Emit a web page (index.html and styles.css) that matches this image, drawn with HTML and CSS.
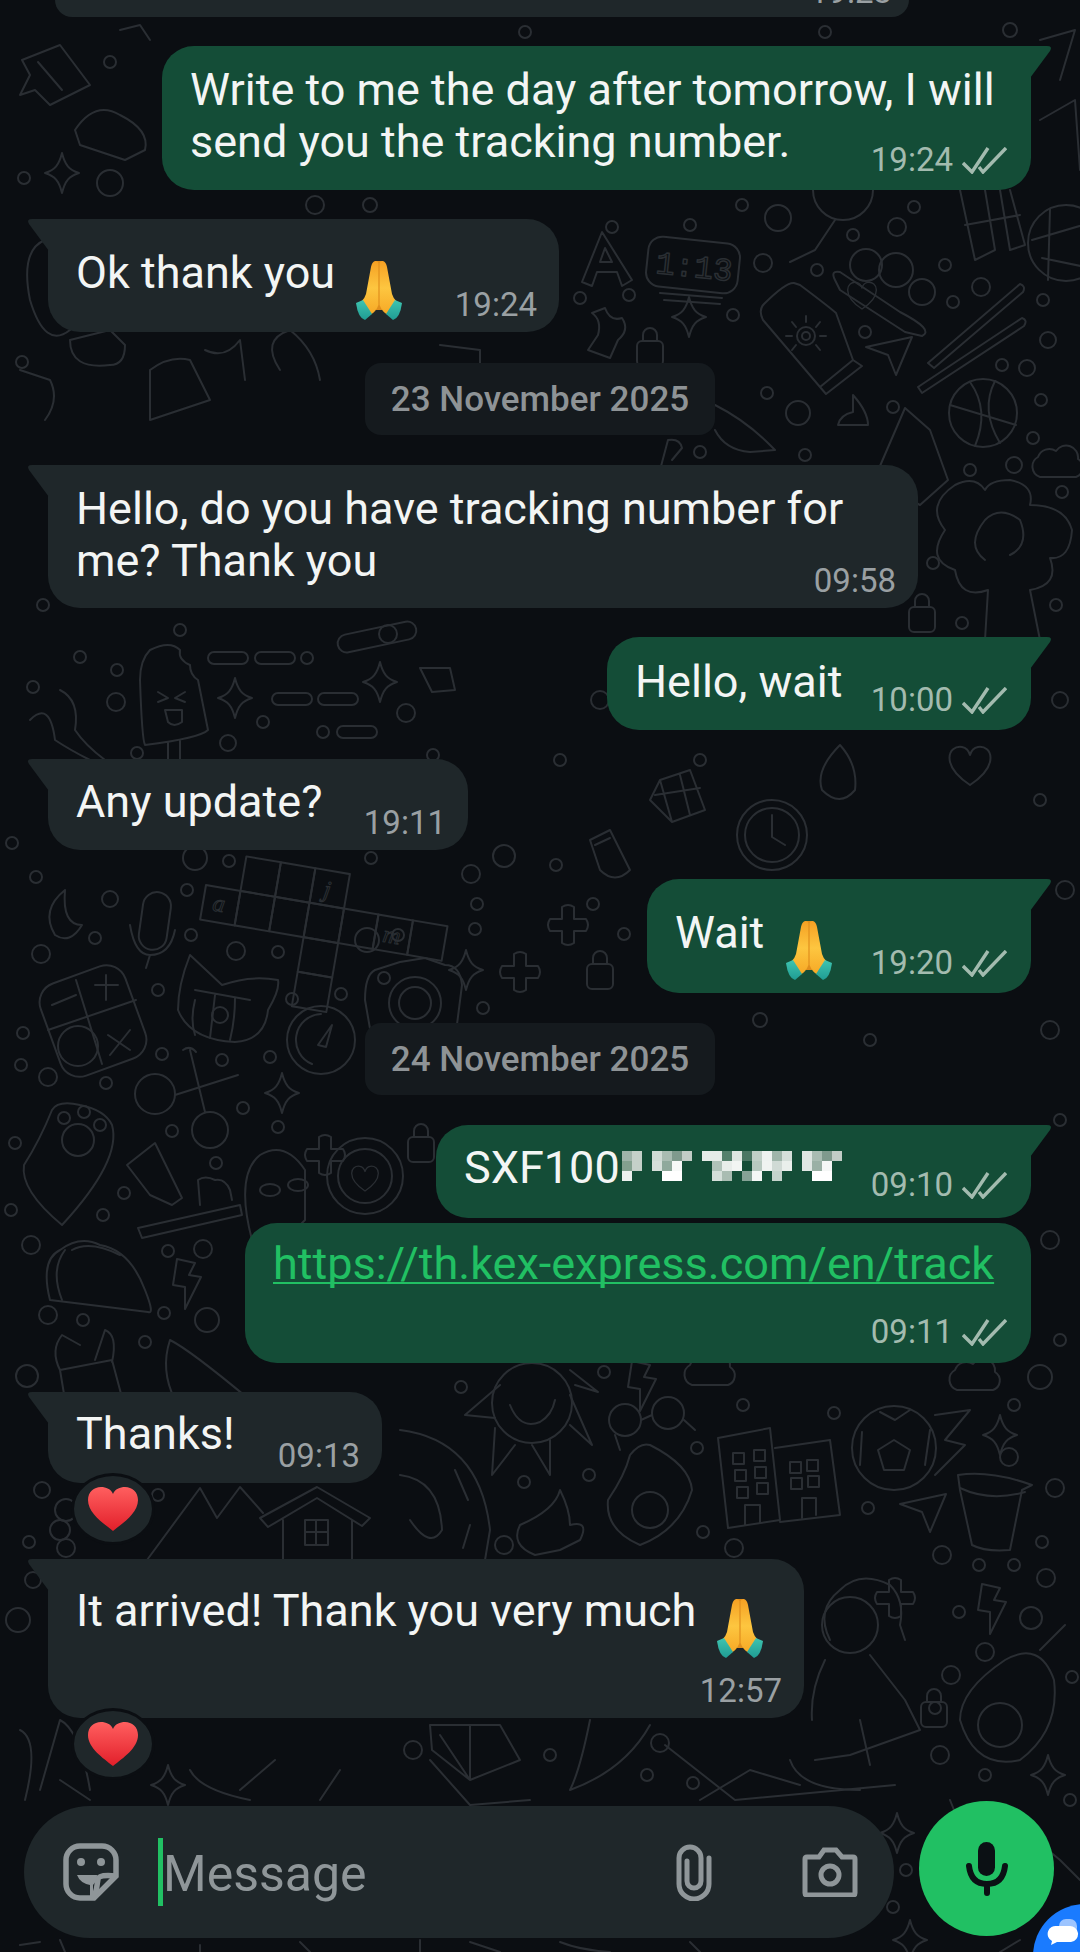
FILE: index.html
```html
<!DOCTYPE html>
<html lang="en">
<head>
  <meta charset="UTF-8" />
  <meta name="viewport" content="width=device-width, initial-scale=1.0" />
  <title>Chat</title>
  <link rel="stylesheet" href="styles.css">
</head>
<body>
  <div class="page">
    <!-- wallpaper -->
    <svg class="doodles" viewBox="0 0 1080 1952" aria-hidden="true">
      <defs>
        <path id="star" d="M0-20C3-8 7-3 17 0C7 3 3 8 0 20C-3 8-7 3-17 0C-7-3-3-8 0-20Z"/>
        <path id="plus" d="M-6-18Q0-22 6-18V-6H18Q22 0 18 6H6V18Q0 22-6 18V6H-18Q-22 0-18-6H-6Z"/>
        <g id="lock"><rect x="-13" y="-6" width="26" height="25" rx="5"/><path d="M-7-6V-12A7 7 0 0 1 7-12V-6"/></g>
        <path id="send" d="M-22-8L24-18L8 20L0 0Z"/>
        <path id="bolt" d="M-10-24L8-20L2-8L14-6L-2 26L-2 4L-14 2Z"/>
        <path id="cloud" d="M-18 12A11 11 0 0 1-20-8A12 12 0 0 1-2-14A12 12 0 0 1 20-6A10 10 0 0 1 18 12Z"/>
        <rect id="pill" x="-20" y="-6" width="40" height="12" rx="6"/>
        <path id="heart" d="M0 20C-30 0-22-20-8-18Q-2-17 0-10Q2-17 8-18C22-20 30 0 0 20Z"/>
      </defs>

      <g class="dots">
        <circle cx="612" cy="227" r="6"/><circle cx="690" cy="225" r="6"/><circle cx="742" cy="205" r="6"/><circle cx="778" cy="218" r="13"/><circle cx="763" cy="263" r="9"/><circle cx="817" cy="270" r="6"/><circle cx="853" cy="235" r="6"/><circle cx="897" cy="227" r="9"/><circle cx="914" cy="207" r="6"/><circle cx="945" cy="265" r="6"/><circle cx="981" cy="287" r="9"/><circle cx="953" cy="302" r="6"/><circle cx="1043" cy="300" r="6"/><circle cx="1048" cy="340" r="8"/><circle cx="1002" cy="365" r="6"/><circle cx="1027" cy="368" r="8"/><circle cx="1041" cy="400" r="6"/><circle cx="1033" cy="438" r="6"/><circle cx="1014" cy="465" r="8"/><circle cx="970" cy="470" r="6"/><circle cx="1062" cy="492" r="6"/><circle cx="933" cy="563" r="6"/><circle cx="1056" cy="605" r="6"/><circle cx="962" cy="623" r="6"/><circle cx="893" cy="407" r="6"/><circle cx="865" cy="332" r="6"/><circle cx="798" cy="413" r="12"/><circle cx="767" cy="393" r="6"/><circle cx="733" cy="315" r="6"/><circle cx="805" cy="455" r="6"/><circle cx="700" cy="452" r="6"/><circle cx="629" cy="295" r="6"/><circle cx="580" cy="298" r="6"/>
        <circle cx="36" cy="877" r="6"/><circle cx="110" cy="899" r="8"/><circle cx="187" cy="890" r="6"/><circle cx="229" cy="861" r="6"/><circle cx="195" cy="858" r="12"/><circle cx="95" cy="938" r="6"/><circle cx="41" cy="954" r="9"/><circle cx="191" cy="935" r="6"/><circle cx="236" cy="951" r="9"/><circle cx="278" cy="952" r="6"/><circle cx="367" cy="940" r="12"/><circle cx="398" cy="935" r="6"/><circle cx="158" cy="990" r="6"/><circle cx="292" cy="999" r="6"/><circle cx="341" cy="994" r="6"/><circle cx="23" cy="1033" r="6"/><circle cx="21" cy="1065" r="6"/><circle cx="48" cy="1077" r="9"/><circle cx="106" cy="1083" r="6"/><circle cx="162" cy="1054" r="6"/><circle cx="222" cy="1060" r="6"/><circle cx="270" cy="1057" r="6"/><circle cx="243" cy="1108" r="6"/><circle cx="278" cy="1127" r="6"/><circle cx="172" cy="1131" r="6"/><circle cx="15" cy="1143" r="6"/><circle cx="216" cy="1163" r="6"/><circle cx="124" cy="1193" r="6"/><circle cx="11" cy="1210" r="6"/><circle cx="103" cy="1215" r="6"/><circle cx="31" cy="1245" r="9"/><circle cx="168" cy="1251" r="6"/><circle cx="203" cy="1249" r="9"/><circle cx="48" cy="1315" r="9"/><circle cx="83" cy="1320" r="6"/><circle cx="164" cy="1313" r="6"/><circle cx="207" cy="1320" r="12"/><circle cx="145" cy="1342" r="6"/><circle cx="27" cy="1376" r="11"/><circle cx="471" cy="874" r="9"/><circle cx="504" cy="856" r="11"/><circle cx="556" cy="865" r="6"/><circle cx="477" cy="904" r="6"/><circle cx="475" cy="929" r="6"/><circle cx="624" cy="934" r="6"/><circle cx="593" cy="904" r="6"/><circle cx="483" cy="1008" r="6"/><circle cx="371" cy="858" r="6"/>
        <circle cx="461" cy="1387" r="6"/><circle cx="604" cy="1372" r="6"/><circle cx="743" cy="1405" r="6"/><circle cx="834" cy="1413" r="6"/><circle cx="1014" cy="1405" r="6"/><circle cx="1040" cy="1377" r="12"/><circle cx="1009" cy="1457" r="9"/><circle cx="1055" cy="1488" r="9"/><circle cx="697" cy="1448" r="6"/><circle cx="589" cy="1475" r="6"/><circle cx="524" cy="1482" r="6"/><circle cx="868" cy="1508" r="6"/><circle cx="703" cy="1532" r="6"/><circle cx="504" cy="1545" r="9"/><circle cx="734" cy="1548" r="9"/><circle cx="942" cy="1555" r="9"/><circle cx="979" cy="1565" r="6"/><circle cx="1014" cy="1565" r="6"/><circle cx="1046" cy="1578" r="9"/><circle cx="1042" cy="1542" r="6"/><circle cx="959" cy="1612" r="6"/><circle cx="1031" cy="1618" r="11"/><circle cx="985" cy="1652" r="9"/><circle cx="951" cy="1675" r="9"/><circle cx="935" cy="1708" r="6"/><circle cx="940" cy="1755" r="9"/><circle cx="985" cy="1775" r="6"/><circle cx="1072" cy="1677" r="6"/><circle cx="660" cy="1743" r="9"/><circle cx="647" cy="1775" r="6"/><circle cx="693" cy="1783" r="6"/><circle cx="550" cy="1755" r="6"/><circle cx="413" cy="1750" r="9"/>
        <circle cx="43" cy="605" r="6"/><circle cx="180" cy="630" r="6"/><circle cx="80" cy="657" r="6"/><circle cx="117" cy="670" r="6"/><circle cx="33" cy="687" r="6"/><circle cx="116" cy="702" r="9"/><circle cx="263" cy="722" r="6"/><circle cx="228" cy="743" r="8"/><circle cx="323" cy="732" r="6"/><circle cx="406" cy="713" r="9"/><circle cx="307" cy="658" r="6"/><circle cx="137" cy="753" r="6"/><circle cx="433" cy="755" r="6"/><circle cx="12" cy="843" r="6"/>
        <circle cx="42" cy="1490" r="8"/><circle cx="158" cy="1495" r="6"/><circle cx="29" cy="1542" r="6"/><circle cx="33" cy="1580" r="8"/><circle cx="18" cy="1620" r="12"/>
        <circle cx="906" cy="1870" r="6"/><circle cx="893" cy="1907" r="6"/><circle cx="1070" cy="1800" r="6"/><circle cx="24" cy="178" r="6"/><circle cx="110" cy="62" r="6"/><circle cx="110" cy="183" r="13"/><circle cx="22" cy="362" r="6"/><circle cx="370" cy="205" r="7"/><circle cx="315" cy="205" r="9"/><circle cx="525" cy="32" r="6"/><circle cx="825" cy="32" r="6"/><circle cx="1010" cy="30" r="7"/>
        <circle cx="1060" cy="700" r="8"/><circle cx="1040" cy="800" r="6"/><circle cx="1065" cy="890" r="9"/><circle cx="700" cy="760" r="6"/><circle cx="560" cy="760" r="6"/><circle cx="600" cy="700" r="9"/><circle cx="1050" cy="1030" r="9"/><circle cx="1060" cy="1120" r="6"/><circle cx="1050" cy="1240" r="9"/><circle cx="1060" cy="1340" r="6"/><circle cx="760" cy="1020" r="7"/><circle cx="870" cy="1040" r="6"/>
      </g>

      <use href="#star" x="689" y="317"/><use href="#star" x="235" y="698"/><use href="#star" x="380" y="682"/><use href="#star" x="62" y="173"/><use href="#star" x="282" y="1093"/><use href="#star" x="1000" y="1435"/><use href="#star" x="1048" y="1775"/><use href="#star" x="897" y="1833"/><use href="#star" x="910" y="1940"/><use href="#star" x="466" y="970"/><use href="#star" x="168" y="1785"/>
      <use href="#plus" x="325" y="1155"/><use href="#plus" x="895" y="1598"/><use href="#plus" x="520" y="972"/><use href="#plus" x="568" y="925"/>
      <use href="#lock" x="650" y="347"/><use href="#lock" x="922" y="613"/><use href="#lock" x="421" y="1143"/><use href="#lock" x="600" y="970"/><use href="#lock" x="934" y="1708"/>
      <use href="#send" x="888" y="355"/><use href="#send" x="922" y="1512"/><use href="#send" x="1010" y="70"/>
      <use href="#bolt" x="187" y="1283"/><use href="#bolt" x="992" y="1608"/><use href="#bolt" x="642" y="1385"/>
      <use href="#cloud" x="710" y="1373"/><use href="#cloud" x="975" y="1378"/><use href="#cloud" x="1058" y="465"/>
      <use href="#pill" x="228" y="658"/><use href="#pill" x="275" y="658"/><use href="#pill" x="292" y="699"/><use href="#pill" x="338" y="699"/><use href="#pill" x="357" y="732"/>
      <use href="#heart" x="970" y="765"/><use href="#heart" x="560" y="1870"/>

      <!-- 1:13 clock -->
      <rect x="647" y="240" width="92" height="50" rx="14" transform="rotate(6 693 265)"/>
      <path d="M660 293L722 298M664 300L720 304"/>
      <text class="doodle-text" x="656" y="277" transform="rotate(6 693 265)">1:13</text>
      <path d="M602 232L582 282L592 286L597 272L617 272L622 286L632 280ZM600 262L605 248L612 262Z"/>
      <!-- apple core, bottle, bean -->
      <path d="M592 313Q602 320 598 335L588 350L610 358L618 340Q630 330 622 318Q610 322 605 308Z"/>
      <path d="M794 283Q786 282 764 304Q758 310 763 320L820 387L853 360L836 313Q828 306 800 285ZM820 387L826 394L862 366L853 360"/>
      <circle cx="806" cy="336" r="9"/>
      <circle cx="806" cy="336" r="4"/>
      <path d="M806 316V322M820 322L816 327M826 336H820M792 322L796 327M786 336H792M792 350L796 345M820 350L816 345"/>
      <path d="M835 280Q830 270 840 272L900 312Q935 330 922 336L905 332L840 290Z"/>
      <circle cx="866" cy="265" r="16"/><circle cx="896" cy="270" r="17"/><circle cx="922" cy="292" r="13"/>
      <use href="#heart" transform="translate(862 295) scale(.7)"/>
      <!-- chopsticks -->
      <path d="M928 363L1020 284Q1026 286 1023 292L934 368ZM918 387L1022 318Q1028 320 1024 326L922 393Z"/>
      <!-- basketball -->
      <circle cx="983" cy="413" r="34"/>
      <path d="M950 405L1016 425M970 382Q990 410 975 446M995 381Q980 410 1000 443"/>
      <!-- beach ball, bamboo -->
      <circle cx="1066" cy="243" r="38"/>
      <path d="M1050 209L1048 280M1032 240L1100 220M1042 258L1100 270"/>
      <path d="M960 190L975 260L995 250L985 190M1000 190L1010 250L1025 245L1010 190M965 225L1020 215"/>
      <circle cx="843" cy="190" r="30"/>
      <path d="M835 220L815 250L790 262"/>
      <!-- broccoli -->
      <path d="M985 640L988 590Q960 600 955 570Q925 560 945 530Q925 505 955 485Q975 475 985 490Q990 480 1010 480Q1035 485 1030 505Q1065 505 1072 530Q1070 560 1050 558Q1060 585 1030 590L1040 640"/>
      <path d="M985 560Q965 545 985 520Q1000 505 1020 520M1010 555Q1030 545 1020 520"/>
      <!-- shell, cupcake, flag -->
      <path d="M715 405Q745 420 770 445L775 450L750 452Q725 450 715 430"/>
      <path d="M880 466L905 408L930 430L948 480L920 505L892 490Q880 480 880 466Z"/>
      <path d="M660 470L668 440Q680 438 682 448L672 460M660 470L654 485"/>
      <path d="M853 412Q840 415 838 425L868 425Q868 412 853 395Z"/>
      <!-- popsicle, chilli, slider -->
      <path d="M150 650Q170 640 180 650Q178 660 190 665Q190 675 198 680L208 730Q200 738 145 745Q142 740 140 680Q140 660 150 650ZM168 742V760M180 740V760"/>
      <path d="M158 692L168 698L158 702M185 692L175 698L185 702M165 710H182V722Q174 728 168 722Z"/>
      <path d="M30 720Q50 700 55 740Q70 750 90 760M60 690Q80 700 75 730Q85 745 105 760"/>
      <rect x="337" y="628" width="80" height="18" rx="9" transform="rotate(-12 377 637)"/>
      <circle cx="388" cy="634" r="9"/>
      <path d="M420 668H450L455 690L432 692L420 668Z"/>
      <!-- flower right side, hearts -->
      <path d="M660 780L690 770L705 810L672 822ZM660 780L650 800L672 822M690 770L705 810M655 795L700 788M680 775L690 815"/>
      <circle cx="772" cy="835" r="35"/><circle cx="772" cy="835" r="27"/>
      <path d="M772 815V837L785 845"/>
      <path d="M840 745Q858 765 855 790Q840 808 822 790Q815 770 840 745Z"/>
      <path d="M610 830L630 870Q615 885 600 870L590 840ZM595 845L610 838"/>
      <!-- crossword -->
      <g transform="translate(206 885) rotate(9.7)">
        <rect width="35" height="35"/><rect x="35" width="35" height="35"/><rect x="70" width="35" height="35"/><rect x="105" width="35" height="35"/><rect x="140" width="35" height="35"/><rect x="175" width="35" height="35"/><rect x="210" width="35" height="35"/>
        <rect x="35" y="-35" width="35" height="35"/><rect x="70" y="-35" width="35" height="35"/><rect x="105" y="-35" width="35" height="35"/>
        <rect x="105" y="35" width="35" height="35"/><rect x="105" y="70" width="35" height="35"/>
        <text class="doodle-small" x="10" y="24">a</text><text class="doodle-small" x="117" y="-8">j</text><text class="doodle-small" x="183" y="26">m</text>
      </g>
      <!-- calculator, moon, mic -->
      <rect x="48" y="972" width="90" height="98" rx="20" transform="rotate(-20 93 1021)"/>
      <path d="M76 980L102 1064M48 1030L136 1000M52 1005L76 995M95 985L118 985M106 975V1000M108 1035L130 1050M130 1030L110 1055"/>
      <circle cx="78" cy="1046" r="20"/>
      <path d="M65 890Q40 910 55 935Q70 945 82 925Q62 925 65 890Z"/>
      <rect x="141" y="892" width="28" height="58" rx="14" transform="rotate(8 155 920)"/>
      <path d="M130 925Q135 955 150 955Q170 955 175 930M150 955L146 968"/>
      <!-- cat, camera -->
      <path d="M190 955L222 985Q250 975 278 980Q280 990 268 1010Q265 1040 235 1042Q190 1040 178 1010Q178 985 190 955Z"/>
      <path d="M195 990L250 1000M195 1000Q190 1020 195 1035M215 995Q212 1020 210 1038M235 998Q235 1020 230 1040"/>
      <circle cx="220" cy="1015" r="8"/>
      <path d="M375 970Q365 975 365 1000L372 1040L455 1040L462 985Q460 965 445 965L425 958L400 962Z"/>
      <circle cx="415" cy="1003" r="26"/><circle cx="415" cy="1003" r="16"/><circle cx="384" cy="978" r="6"/>
      <circle cx="321" cy="1040" r="34"/>
      <path d="M321 1014A26 26 0 0 0 312 1064M318 1045L332 1025L326 1047Z"/>
      <!-- scissors -->
      <circle cx="155" cy="1094" r="20"/><circle cx="210" cy="1130" r="18"/>
      <path d="M175 1095L238 1075M190 1050L205 1112M183 1050Q190 1045 196 1052"/>
      <!-- paw, tube, brush -->
      <path d="M52 1110Q58 1100 80 1105Q105 1110 112 1125Q122 1160 62 1225Q20 1190 24 1165Q40 1140 52 1110Z"/>
      <circle cx="78" cy="1140" r="16"/><circle cx="64" cy="1118" r="6"/><circle cx="84" cy="1112" r="6"/><circle cx="100" cy="1125" r="6"/>
      <path d="M127 1165L155 1143L182 1198L172 1205L150 1195Z"/>
      <path d="M138 1228L240 1205L242 1215L142 1238ZM200 1205L198 1180Q205 1175 215 1180Q225 1178 230 1190L232 1200"/>
      <!-- glasses person, heart coin -->
      <path d="M252 1240Q235 1175 260 1155Q285 1140 305 1170L305 1220L290 1235"/>
      <ellipse cx="270" cy="1190" rx="10" ry="6"/><ellipse cx="298" cy="1185" rx="10" ry="6"/>
      <circle cx="365" cy="1176" r="38"/><circle cx="365" cy="1176" r="27"/>
      <use href="#heart" transform="translate(365 1178) scale(.65)"/>
      <!-- taco, bag -->
      <path d="M50 1300Q40 1260 60 1250Q80 1235 100 1245Q130 1250 145 1290Q155 1315 148 1312Z"/>
      <path d="M65 1250Q50 1270 62 1300M72 1250Q90 1240 120 1255"/>
      <path d="M60 1370L112 1360L128 1420L70 1430ZM60 1370Q50 1350 62 1335L80 1345M95 1360L105 1330Q118 1335 112 1362"/>
      <path d="M170 1340Q190 1350 250 1400L240 1415L175 1400Q160 1370 170 1340Z"/>
      <!-- sun, glasses, rainbow -->
      <circle cx="532" cy="1403" r="40"/>
      <path d="M510 1405Q520 1430 540 1422Q552 1415 555 1400M500 1385L465 1415L495 1418M495 1428L492 1475L515 1445M532 1445L550 1475L550 1440M570 1425L592 1445L570 1395M575 1385L598 1392L570 1370"/>
      <circle cx="625" cy="1420" r="16"/><circle cx="668" cy="1413" r="16"/>
      <path d="M641 1420L652 1415M615 1435L620 1450M684 1420L695 1430"/>
      <path d="M400 1430Q480 1440 490 1530L485 1560M400 1475Q440 1480 442 1530Q430 1550 410 1520M455 1470L468 1500M470 1525L463 1548"/>
      <path d="M520 1525Q555 1510 560 1490Q570 1510 570 1525Q590 1520 580 1540L560 1550L535 1555Q510 1545 520 1525Z"/>
      <!-- egg, buildings -->
      <path d="M650 1445Q690 1465 692 1490Q680 1530 640 1545Q605 1530 608 1500Q625 1475 630 1455Q640 1442 650 1445Z"/>
      <circle cx="650" cy="1510" r="18"/>
      <path d="M718 1438L770 1428L780 1520L728 1528ZM775 1448L830 1440L840 1515L780 1522"/>
      <rect x="733" y="1453" width="11" height="11"/><rect x="754" y="1450" width="11" height="11"/><rect x="735" y="1470" width="11" height="11"/><rect x="755" y="1467" width="11" height="11"/><rect x="737" y="1487" width="11" height="11"/><rect x="757" y="1483" width="11" height="11"/><rect x="790" y="1462" width="11" height="11"/><rect x="807" y="1460" width="11" height="11"/><rect x="791" y="1478" width="11" height="11"/><rect x="808" y="1476" width="11" height="11"/>
      <path d="M745 1525V1505H760V1523M802 1518V1498H816V1515"/>
      <!-- football, pot, avocado, woman -->
      <circle cx="894" cy="1448" r="42"/>
      <path d="M894 1440L910 1450L904 1470H884L878 1450ZM880 1412L895 1420L910 1410M930 1430L925 1465M862 1432L860 1465M935 1415L970 1410L945 1440L965 1445L935 1475"/>
      <path d="M958 1475Q990 1470 1032 1485L1022 1490L1010 1550Q985 1552 972 1545L960 1490Z"/>
      <path d="M960 1488Q990 1502 1025 1492"/>
      <path d="M1005 1660Q1040 1640 1054 1680Q1060 1730 1020 1760Q975 1770 960 1720Q960 1690 1005 1660ZM1040 1650L1065 1625"/>
      <circle cx="1000" cy="1725" r="22"/>
      <path d="M830 1640Q815 1610 840 1590Q860 1570 890 1585Q905 1600 900 1625L905 1640"/>
      <circle cx="850" cy="1625" r="28"/>
      <path d="M825 1660Q810 1690 812 1720M870 1655L905 1700L920 1730L850 1755L815 1760M665 1745L735 1800L895 1785M790 1760Q800 1790 860 1790M860 1720L870 1765"/>
      <!-- drum, leaf -->
      <path d="M430 1725L500 1725L520 1760L470 1780L432 1750ZM440 1735L470 1780M470 1725V1780M430 1760L470 1805L530 1800"/>
      <path d="M590 1720Q580 1770 570 1790Q625 1770 650 1725"/>
      <!-- house, mountain -->
      <path d="M147 1560L200 1488L217 1518L240 1487L263 1513"/>
      <path d="M260 1518L317 1487L370 1518L362 1526L317 1498L268 1527ZM283 1520V1560M352 1520V1560"/>
      <rect x="305" y="1520" width="23" height="25"/>
      <path d="M305 1532H328M316 1520V1545"/>
      <circle cx="66" cy="1510" r="11"/><circle cx="60" cy="1530" r="10"/><circle cx="66" cy="1548" r="9"/>
      <!-- bottom strip -->
      <path d="M40 1790L60 1720Q80 1730 90 1790M20 1730Q40 1740 25 1800M240 1790L275 1760M320 1800L340 1770M90 1800L60 1780M190 1770Q200 1790 250 1800M700 1800L750 1770L800 1785"/>
      <path d="M20 1945L40 1942M60 1940L65 1952M200 1945V1952M300 1942L310 1952M420 1940V1952M470 1942L500 1952M560 1942Q580 1950 610 1952M690 1942L700 1952"/>
      <path d="M1000 1810L1060 1860L1080 1880M950 1800L960 1825M1020 1940L1000 1952"/>
      <!-- top left corner -->
      <path d="M22 60L60 45L90 85L50 105L35 90L20 95L30 75ZM38 62L62 90"/>
      <path d="M75 130Q95 100 120 115Q150 130 145 150L125 160L95 150L80 145Z"/>
      <path d="M120 30L140 25L150 40"/>
      <path d="M45 240Q20 250 30 300Q45 350 70 330M20 370L50 380Q60 400 45 420"/>
      <path d="M70 340Q70 370 110 365Q125 365 125 345L110 330Z"/>
      <path d="M150 370Q170 355 190 360L210 400L150 420Z"/>
      <path d="M280 370Q260 340 290 330Q315 350 320 380"/>
      <path d="M205 350Q225 360 240 340L245 380"/>
      <path d="M440 345L480 350L480 365L430 370M560 90L620 80"/>
      <path d="M1040 40L1075 30L1060 80M1040 120L1075 100L1080 170"/>
    </svg>

    <main class="chat">
      <div class="bubble in cut">
        <span class="meta">19:23</span>
      </div>

      <div class="bubble out multi write">
        <p class="text">Write to me the day after tomorrow, I will<br>send you the tracking number.</p>
        <span class="meta">19:24
          <svg class="ticks" viewBox="0 0 45 27"><path d="M1 16L10 25L26 1M17 20L21 25L44 1"/></svg>
        </span>
      </div>

      <div class="bubble in tall ok">
        <p class="text">Ok thank you
          <svg class="emoji" viewBox="0 0 48 60"><use href="#pray"/></svg>
        </p>
        <span class="meta">19:24</span>
      </div>

      <div class="date first">23 November 2025</div>

      <div class="bubble in multi tracking">
        <p class="text">Hello, do you have tracking number for<br>me? Thank you</p>
        <span class="meta">09:58</span>
      </div>

      <div class="bubble out wait-short">
        <p class="text">Hello, wait</p>
        <span class="meta">10:00
          <svg class="ticks" viewBox="0 0 45 27"><path d="M1 16L10 25L26 1M17 20L21 25L44 1"/></svg>
        </span>
      </div>

      <div class="bubble in update">
        <p class="text">Any update?</p>
        <span class="meta">19:11</span>
      </div>

      <div class="bubble out tall wait-pray">
        <p class="text">Wait
          <svg class="emoji" viewBox="0 0 48 60"><use href="#pray"/></svg>
        </p>
        <span class="meta">19:20
          <svg class="ticks" viewBox="0 0 45 27"><path d="M1 16L10 25L26 1M17 20L21 25L44 1"/></svg>
        </span>
      </div>

      <div class="date">24 November 2025</div>

      <div class="bubble out code">
        <p class="text">SXF100<svg class="pixels" viewBox="0 0 22 3" shape-rendering="crispEdges">
          <rect x="0" y="0" width="1" height="1" fill="#9fb3a9"/><rect x="1" y="0" width="1" height="1" fill="#c5d0c9"/><rect x="3" y="0" width="1" height="1" fill="#d0dbd5"/><rect x="4" y="0" width="1" height="1" fill="#a9bcb2"/><rect x="5" y="0" width="1" height="1" fill="#7f9a8d"/><rect x="6" y="0" width="1" height="1" fill="#c2cdc7"/><rect x="8" y="0" width="1" height="1" fill="#e5ebe8"/><rect x="9" y="0" width="1" height="1" fill="#e5ebe8"/><rect x="10" y="0" width="1" height="1" fill="#54806c"/><rect x="11" y="0" width="1" height="1" fill="#dfe6e2"/><rect x="12" y="0" width="1" height="1" fill="#4a7663"/><rect x="13" y="0" width="1" height="1" fill="#c0cfc7"/><rect x="14" y="0" width="1" height="1" fill="#eef2f0"/><rect x="15" y="0" width="1" height="1" fill="#9fb5aa"/><rect x="16" y="0" width="1" height="1" fill="#d5dfda"/><rect x="18" y="0" width="1" height="1" fill="#dfe6e2"/><rect x="19" y="0" width="1" height="1" fill="#a9bcb2"/><rect x="20" y="0" width="1" height="1" fill="#7f9a8d"/><rect x="21" y="0" width="1" height="1" fill="#c2cdc7"/>
          <rect x="0" y="1" width="1" height="1" fill="#83a08f"/><rect x="1" y="1" width="1" height="1" fill="#c5d0c9"/><rect x="3" y="1" width="1" height="1" fill="#d6dfda"/><rect x="4" y="1" width="1" height="1" fill="#8fa99c"/><rect x="5" y="1" width="1" height="1" fill="#f7f9f8"/><rect x="9" y="1" width="1" height="1" fill="#b0c2b9"/><rect x="10" y="1" width="1" height="1" fill="#e8edea"/><rect x="11" y="1" width="1" height="1" fill="#f2f5f3"/><rect x="13" y="1" width="1" height="1" fill="#b7c8bf"/><rect x="14" y="1" width="1" height="1" fill="#f0f3f1"/><rect x="15" y="1" width="1" height="1" fill="#d0dad5"/><rect x="16" y="1" width="1" height="1" fill="#eaefec"/><rect x="18" y="1" width="1" height="1" fill="#e0e6e3"/><rect x="19" y="1" width="1" height="1" fill="#9ab0a5"/><rect x="20" y="1" width="1" height="1" fill="#f5f7f6"/>
          <rect x="0" y="2" width="1" height="1" fill="#ecf0ee"/><rect x="4" y="2" width="1" height="1" fill="#ffffff"/><rect x="5" y="2" width="1" height="1" fill="#ffffff"/><rect x="9" y="2" width="1" height="1" fill="#d5dfda"/><rect x="10" y="2" width="1" height="1" fill="#a9bcb2"/><rect x="12" y="2" width="1" height="1" fill="#86a296"/><rect x="13" y="2" width="1" height="1" fill="#f5f7f6"/><rect x="15" y="2" width="1" height="1" fill="#c5d3cc"/><rect x="19" y="2" width="1" height="1" fill="#ffffff"/><rect x="20" y="2" width="1" height="1" fill="#ffffff"/>
        </svg></p>
        <span class="meta">09:10
          <svg class="ticks" viewBox="0 0 45 27"><path d="M1 16L10 25L26 1M17 20L21 25L44 1"/></svg>
        </span>
      </div>

      <div class="bubble out stacked next link-msg">
        <p class="text"><a class="link" href="#">https://th.kex-express.com/en/track</a></p>
        <span class="meta">09:11
          <svg class="ticks" viewBox="0 0 45 27"><path d="M1 16L10 25L26 1M17 20L21 25L44 1"/></svg>
        </span>
      </div>

      <div class="bubble in thanks">
        <p class="text">Thanks!</p>
        <span class="meta">09:13</span>
      </div>
      <div class="reaction">
        <svg class="heart" viewBox="0 0 50 44"><use href="#redheart"/></svg>
      </div>

      <div class="bubble in tall stacked arrived">
        <p class="text">It arrived! Thank you very much
          <svg class="emoji" viewBox="0 0 48 60"><use href="#pray"/></svg>
        </p>
        <span class="meta">12:57</span>
      </div>
      <div class="reaction">
        <svg class="heart" viewBox="0 0 50 44"><use href="#redheart"/></svg>
      </div>
    </main>

    <footer class="bottom">
      <div class="composer">
        <svg class="icon sticker" viewBox="0 0 56 58">
          <path d="M17 3H39A14 14 0 0 1 53 17V33L31 55H17A14 14 0 0 1 3 41V17A14 14 0 0 1 17 3Z"/>
          <path d="M53 33Q36 31 35 36Q34 46 31 55" />
          <circle class="solid" cx="18" cy="19" r="4"/>
          <circle class="solid" cx="38" cy="19" r="4"/>
          <path class="solid" d="M14 32H34Q34 38 30 42V55H27V42Q17 40 14 32Z"/>
        </svg>
        <span class="cursor"></span>
        <span class="placeholder">Message</span>
        <svg class="icon clip" viewBox="0 0 36 57">
          <path d="M33 14V40A15 15 0 0 1 3 40V14A11 11 0 0 1 25 14V37A7 7 0 0 1 11 37V17"/>
        </svg>
        <svg class="icon camera" viewBox="0 0 56 50">
          <path d="M3 12Q3 10 5 10H17L22 3H34L40 10H51Q53 10 53 12V46Q53 48 51 48H5Q3 48 3 46Z"/>
          <circle cx="28" cy="28" r="9"/>
        </svg>
      </div>
      <button class="mic">
        <svg viewBox="0 0 40 54" class="mic-icon">
          <rect x="11" y="0" width="17" height="34" rx="8.5"/>
          <path d="M2 24Q4 42 20 42Q36 42 38 24M20 42V51"/>
        </svg>
      </button>
    </footer>

    <div class="float-btn">
      <svg viewBox="0 0 32 32" class="float-icon">
        <rect x="12" y="0" width="18" height="16" rx="7" fill="#9cc4ff"/>
        <path d="M10 7H22A8 8 0 0 1 24 23H10L4 26L5 22A8 8 0 0 1 10 7Z" fill="#fff"/>
      </svg>
    </div>

    <svg class="sprites" aria-hidden="true">
      <defs>
        <linearGradient id="skin" x1="0" y1="0" x2="0" y2="1">
          <stop offset="0" stop-color="#f5a023"/><stop offset=".5" stop-color="#fdc640"/><stop offset="1" stop-color="#f6a825"/>
        </linearGradient>
        <linearGradient id="cuff" x1="0" y1="0" x2="0" y2="1">
          <stop offset="0" stop-color="#3fc4b0"/><stop offset="1" stop-color="#1f9c93"/>
        </linearGradient>
        <linearGradient id="red" x1="0" y1="0" x2="0" y2="1">
          <stop offset="0" stop-color="#ff5f5f"/><stop offset="1" stop-color="#e21f2a"/>
        </linearGradient>
        <g id="pray">
          <path fill="#e08e1c" d="M20 1H28L27 50H21Z"/>
          <path fill="url(#skin)" d="M20 1Q17 2 16 7L11 34Q10 38 6 42L15 55Q21 52 23.4 45V3Q23 1 20 1Z"/>
          <path fill="url(#skin)" d="M28 1Q31 2 32 7L37 34Q38 38 42 42L33 55Q27 52 24.6 45V3Q25 1 28 1Z"/>
          <path fill="url(#cuff)" d="M1 43L8 40L17 54L10 60Q3 58 1 43Z"/>
          <path fill="url(#cuff)" d="M47 43L40 40L31 54L38 60Q45 58 47 43Z"/>
        </g>
        <path id="redheart" fill="url(#red)" d="M25 44C15 36 0 26 0 13C0 5 6 0 13 0C18 0 23 2 25 7C27 2 32 0 37 0C44 0 50 5 50 13C50 26 35 36 25 44Z"/>
      </defs>
    </svg>
  </div>
</body>
</html>
```

FILE: styles.css
```css
:root {
  --bg: #0b0e12;
  --line: #2a2e33;
  --in: #1f272a;
  --out: #144d37;
  --green: #21c063;
  --text: #f3f5f4;
  --time-in: #9aa0a3;
  --time-out: #a3bbaf;
  --icon: #8f9699;
}

* {
  box-sizing: border-box;
}

body {
  margin: 0;
  background-color: var(--bg);
  font-family: Roboto, 'Noto Sans', sans-serif;
  color: var(--text);
}

.page {
  position: relative;
  width: 1080px;
  height: 1952px;
  overflow: hidden;
  display: flex;
  flex-direction: column;
  background-color: var(--bg);
}

.doodles {
  position: absolute;
  top: 0;
  left: 0;
  width: 1080px;
  height: 1952px;
  fill: none;
  stroke: var(--line);
  stroke-width: 2;
  stroke-linejoin: round;
  stroke-linecap: round;
}

.doodle-text {
  font-size: 32px;
  font-family: 'Liberation Mono', monospace;
  stroke-width: 1.5;
}

.doodle-small {
  font-size: 24px;
  font-family: 'Liberation Serif', serif;
  font-style: italic;
  stroke-width: 1;
}

.sprites {
  position: absolute;
  width: 0;
  height: 0;
}

.chat {
  position: relative;
  flex: 1;
  display: flex;
  flex-direction: column;
  align-items: flex-start;
}

.bubble {
  position: relative;
  display: flex;
  justify-content: space-between;
  align-items: flex-end;
  margin-top: 29px;
  padding: 17px 22px 9px 28px;
  border-radius: 32px;
}

.text {
  margin: 0 0 13px;
  font-size: 45px;
  line-height: 52px;
  white-space: nowrap;
}

.meta {
  display: flex;
  align-items: center;
  gap: 9px;
  font-size: 33px;
  line-height: 36px;
  white-space: nowrap;
}

.ticks {
  width: 45px;
  height: 27px;
  fill: none;
  stroke: currentColor;
  stroke-width: 3.4;
}

.in {
  margin-left: 48px;
  background-color: var(--in);
  border-top-left-radius: 0;
}

.in .meta {
  color: var(--time-in);
}

.out {
  align-self: flex-end;
  margin-right: 49px;
  padding: 19px 24px 12px 28px;
  background-color: var(--out);
  border-top-right-radius: 0;
}

.out .text {
  margin-bottom: 10px;
}

.out .meta {
  color: var(--time-out);
}

/* tails */
.in::before,
.out::before {
  content: "";
  position: absolute;
  top: 0;
  width: 22px;
  height: 32px;
  background-color: inherit;
}

.in::before {
  left: -21px;
  clip-path: path("M22 0H5Q-1 0 2 5L22 32Z");
}

.out::before {
  right: -21px;
  clip-path: path("M0 0H17Q23 0 20 5L0 32Z");
}

.cut {
  width: 854px;
  height: 17px;
  margin-top: 0;
  margin-left: 55px;
  padding: 0 17px 7px 0;
  justify-content: flex-end;
  border-radius: 0 0 30px 30px;
}

.cut::before {
  display: none;
}

/* message with a line above the time */
.multi,
.stacked {
  display: block;
}

.multi .text {
  margin-bottom: 0;
}

.multi .meta,
.stacked .meta {
  justify-content: flex-end;
}

.in.multi {
  padding-top: 18px;
}

.in.multi .meta {
  margin-top: -24px;
}

.out.multi {
  padding-top: 18px;
}

.out.multi .meta {
  margin-top: -26px;
}

.tall {
  padding-top: 28px;
}

.tall .text {
  height: 52px;
  margin-bottom: 24px;
}

.out.tall .text {
  margin-bottom: 22px;
}

.out.tall {
  padding-top: 28px;
}

.emoji {
  width: 48px;
  height: 60px;
  margin: -30px 0 -16px 9px;
  vertical-align: -16px;
}

.stacked .text {
  margin-bottom: 0;
}

.next {
  margin-top: 5px;
  padding-top: 15px;
  border-top-right-radius: 32px;
}

.next::before {
  display: none;
}

.link {
  color: var(--green);
  text-decoration: underline;
  text-underline-offset: 3px;
  text-decoration-thickness: 2px;
  text-decoration-skip-ink: none;
}

.pixels {
  width: 220px;
  height: 30px;
  margin-left: 2px;
  vertical-align: 2px;
}

.write { width: 869px; }
.ok { width: 511px; }
.tracking { width: 870px; }
.wait-short { width: 424px; }
.update { width: 420px; }
.wait-pray { width: 384px; }
.code { width: 595px; padding-top: 17px; padding-bottom: 15px; }
.out.code .text { margin-bottom: 9px; }
.link-msg { width: 786px; height: 140px; }
.link-msg .meta { margin-top: 24px; }
.thanks { width: 334px; padding-top: 16px; }
.thanks .text { margin-bottom: 14px; }
.arrived { width: 756px; padding-top: 26px; }
.arrived .meta { margin-top: 36px; }

.date {
  align-self: center;
  margin-top: 30px;
  margin-bottom: 1px;
  padding: 2px 26px 0;
  height: 72px;
  line-height: 70px;
  font-size: 35px;
  font-weight: 500;
  color: #8e9396;
  background-color: #151a1e;
  border-radius: 16px;
}

.first {
  margin-top: 31px;
}

.reaction {
  position: relative;
  display: flex;
  justify-content: center;
  align-items: center;
  width: 84px;
  height: 72px;
  margin: -10px 0 -15px 71px;
  background-color: var(--in);
  border: 3px solid var(--bg);
  border-radius: 50%;
}

.heart {
  width: 50px;
  height: 44px;
}

.bottom {
  position: relative;
  display: flex;
  align-items: flex-end;
  gap: 25px;
  padding: 0 26px 14px 24px;
}

.composer {
  display: flex;
  align-items: center;
  width: 870px;
  height: 132px;
  padding-left: 39px;
  background-color: var(--in);
  border-radius: 66px;
}

.icon {
  flex: none;
  fill: none;
  stroke: var(--icon);
  stroke-width: 5;
}

.sticker {
  width: 56px;
  height: 58px;
  stroke-width: 5.5;
}

.sticker .solid {
  fill: var(--icon);
  stroke: none;
}

.cursor {
  width: 5px;
  height: 68px;
  margin-left: 39px;
  background-color: var(--green);
}

.placeholder {
  flex: 1;
  padding-top: 4px;
  font-size: 50px;
  line-height: 68px;
  color: var(--icon);
}

.clip {
  width: 36px;
  height: 57px;
  margin-right: 90px;
  stroke-linecap: round;
}

.camera {
  width: 56px;
  height: 50px;
  margin-right: 36px;
}

.mic {
  display: flex;
  justify-content: center;
  align-items: center;
  width: 135px;
  height: 135px;
  margin-bottom: 2px;
  padding: 0;
  background-color: var(--green);
  border: none;
  border-radius: 50%;
}

.mic-icon {
  width: 40px;
  height: 54px;
  fill: #0b1014;
  stroke: none;
  overflow: visible;
}

.mic-icon path {
  fill: none;
  stroke: #0b1014;
  stroke-width: 6;
  stroke-linecap: round;
}

/* floating bubble, lies over the corner */
.float-btn {
  position: absolute;
  left: 1033px;
  top: 1904px;
  width: 104px;
  height: 104px;
  background-color: #1a7bff;
  border-radius: 50%;
}

.float-icon {
  position: absolute;
  left: 14px;
  top: 15px;
  width: 32px;
  height: 32px;
}
```
